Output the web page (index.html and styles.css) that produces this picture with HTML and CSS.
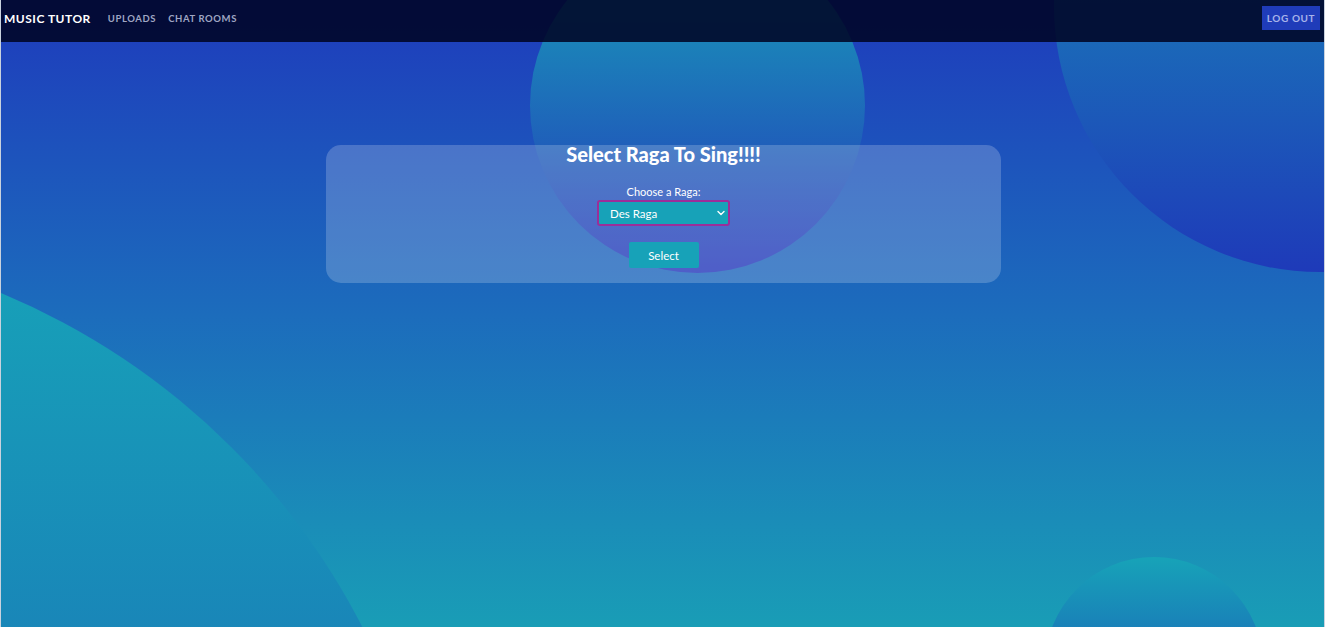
FILE: index.html
```html
<!DOCTYPE html>
<html lang="en">
<head>
<meta charset="utf-8">
<title>Music Tutor</title>
<link rel="stylesheet" href="styles.css">
</head>
<body>
<div class="page">
  <div class="circle circle-top"></div>
  <div class="circle circle-right"></div>
  <div class="circle circle-left"></div>
  <div class="circle circle-bottom"></div>

  <nav class="navbar">
    <div class="nav-left">
      <a class="brand" href="#">MUSIC TUTOR</a>
      <a class="nav-link" href="#">UPLOADS</a>
      <a class="nav-link" href="#">CHAT ROOMS</a>
    </div>
    <button class="logout">LOG OUT</button>
  </nav>

  <main class="main">
    <form class="card">
      <h1 class="title">Select Raga To Sing!!!!</h1>
      <label class="label" for="raga">Choose a Raga:</label>
      <div class="select-wrap">
        <select id="raga" class="select">
          <option>Des Raga</option>
          <option>Yaman Raga</option>
          <option>Bhairav Raga</option>
        </select>
        <svg class="chevron" width="8" height="6" viewBox="0 0 8 6"><path d="M1 1.5 L4 4.5 L7 1.5" fill="none" stroke="#ffffff" stroke-width="1.4" stroke-linecap="round" stroke-linejoin="round"/></svg>
      </div>
      <button type="button" class="btn">Select</button>
    </form>
  </main>
</div>
</body>
</html>
```

FILE: styles.css
```css
html {
  background: #c9d2de;
  height: 100%;
}
body {
  margin: 0 1px;
  height: 100%;
  font-family: Lato, "Liberation Sans", sans-serif;
}
.page {
  position: relative;
  height: 100%;
  overflow: hidden;
  background: linear-gradient(180deg, #1e3bbc 0%, #1c6cbc 50%, #199db6 100%);
  display: flex;
  flex-direction: column;
}
.circle {
  position: absolute;
  border-radius: 50%;
  background: linear-gradient(180deg, #17a3b8 0%, #1e3ab9 100%);
  z-index: 0;
}
.circle-top {
  left: 529px;
  top: -62px;
  width: 335px;
  height: 335px;
  background: linear-gradient(180deg, #17a3b8 0%, #2436bb 100%);
}
.circle-right {
  left: 1053px;
  top: -260px;
  width: 532px;
  height: 532px;
}
.circle-left {
  left: -990px;
  top: 238px;
  width: 1430px;
  height: 1430px;
}
.circle-bottom {
  left: 1044px;
  top: 557px;
  width: 218px;
  height: 218px;
}
.navbar {
  position: relative;
  z-index: 2;
  height: 42px;
  flex: 0 0 42px;
  box-sizing: border-box;
  display: flex;
  align-items: flex-start;
  justify-content: space-between;
  padding: 6px 4px 0 3px;
  background: rgba(0, 4, 36, 0.88);
}
.nav-left {
  display: flex;
  align-items: center;
  gap: 12px;
  height: 24px;
}
.brand {
  color: #ffffff;
  text-decoration: none;
  font-weight: 700;
  font-size: 12px;
  letter-spacing: 0.5px;
  margin-right: 5px;
}
.nav-link {
  color: #9fa6c3;
  text-decoration: none;
  font-weight: 700;
  font-size: 9.5px;
  letter-spacing: 0.6px;
}
.logout {
  height: 24px;
  width: 58px;
  padding: 0;
  border: none;
  border-radius: 0;
  background: #1f3cb9;
  color: #a7b3ea;
  font-family: Lato, "Liberation Sans", sans-serif;
  font-weight: 700;
  font-size: 10px;
  letter-spacing: 0.6px;
}
.main {
  position: relative;
  z-index: 1;
  display: flex;
  justify-content: center;
  padding-top: 103px;
}
.card {
  width: 675px;
  height: 138px;
  box-sizing: border-box;
  margin: 0 0 0 2px;
  border-radius: 15px;
  background: rgba(255, 255, 255, 0.2);
  display: flex;
  flex-direction: column;
  align-items: center;
}
.title {
  margin: 0;
  color: #ffffff;
  font-family: Lato, "Liberation Sans", sans-serif;
  font-weight: 900;
  font-size: 20px;
  line-height: 22px;
  margin-top: -2px;
}
.label {
  color: #ffffff;
  font-size: 11px;
  margin-top: 20px;
  line-height: 14px;
}
.select-wrap {
  position: relative;
  margin-top: 1px;
}
.select {
  appearance: none;
  -webkit-appearance: none;
  width: 133px;
  height: 26px;
  box-sizing: border-box;
  border: 2px solid #9c2d9a;
  border-radius: 3px;
  background: #17a2b8;
  color: #ffffff;
  font-family: Lato, "Liberation Sans", sans-serif;
  font-size: 11.5px;
  padding: 0 0 0 11px;
  outline: none;
  display: block;
}
.chevron {
  position: absolute;
  right: 5px;
  top: 10px;
  pointer-events: none;
}
.btn {
  margin-top: 16px;
  width: 70px;
  height: 26px;
  border: none;
  border-radius: 2px;
  background: #17a2b8;
  color: #ffffff;
  font-family: Lato, "Liberation Sans", sans-serif;
  font-size: 11.5px;
  padding: 0;
}
```
